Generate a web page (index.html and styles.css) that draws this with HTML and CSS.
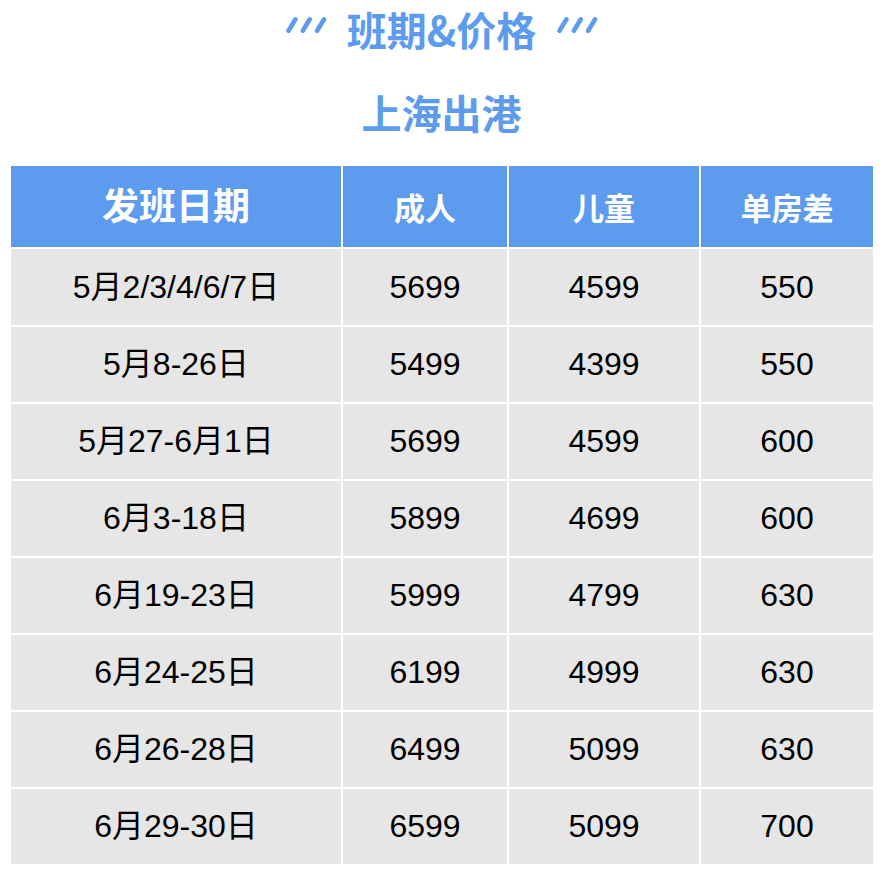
FILE: index.html
```html
<!DOCTYPE html>
<html lang="zh-CN">
<head>
<meta charset="utf-8">
<title>班期&amp;价格</title>
<link rel="stylesheet" href="styles.css">
</head>
<body>
<div class="page">
  <div class="title-row">
    <svg class="slashes" width="44" height="18" viewBox="0 0 44 18"><g stroke="#5d9bef" stroke-width="4.6" stroke-linecap="round"><line x1="4.5" y1="14.7" x2="11.5" y2="3.3"/><line x1="18.8" y1="14.7" x2="25.8" y2="3.3"/><line x1="33.1" y1="14.7" x2="40.1" y2="3.3"/></g></svg>
    <h1 class="title">班期&amp;价格</h1>
    <svg class="slashes" width="44" height="18" viewBox="0 0 44 18"><g stroke="#5d9bef" stroke-width="4.6" stroke-linecap="round"><line x1="4.5" y1="14.7" x2="11.5" y2="3.3"/><line x1="18.8" y1="14.7" x2="25.8" y2="3.3"/><line x1="33.1" y1="14.7" x2="40.1" y2="3.3"/></g></svg>
  </div>
  <h2 class="subtitle">上海出港</h2>
  <div class="table">
    <div class="th th-first">发班日期</div>
    <div class="th">成人</div>
    <div class="th">儿童</div>
    <div class="th">单房差</div>

    <div class="td">5月2/3/4/6/7日</div><div class="td">5699</div><div class="td">4599</div><div class="td">550</div>
    <div class="td">5月8-26日</div><div class="td">5499</div><div class="td">4399</div><div class="td">550</div>
    <div class="td">5月27-6月1日</div><div class="td">5699</div><div class="td">4599</div><div class="td">600</div>
    <div class="td">6月3-18日</div><div class="td">5899</div><div class="td">4699</div><div class="td">600</div>
    <div class="td">6月19-23日</div><div class="td">5999</div><div class="td">4799</div><div class="td">630</div>
    <div class="td">6月24-25日</div><div class="td">6199</div><div class="td">4999</div><div class="td">630</div>
    <div class="td">6月26-28日</div><div class="td">6499</div><div class="td">5099</div><div class="td">630</div>
    <div class="td">6月29-30日</div><div class="td">6599</div><div class="td">5099</div><div class="td">700</div>
  </div>
</div>
</body>
</html>
```

FILE: styles.css
```css
html, body {
  margin: 0;
  padding: 0;
  background: #ffffff;
}

.page {
  width: 883px;
  font-family: "Liberation Sans", "Noto Sans CJK SC", sans-serif;
}

.title-row {
  height: 55px;
  display: flex;
  align-items: flex-start;
  justify-content: center;
  gap: 19px;
}

.title {
  margin: 0;
  font-family: "Noto Sans CJK SC", sans-serif;
  font-weight: 700;
  font-size: 40px;
  line-height: 58px;
  color: #5d9bef;
}

.slashes {
  display: block;
  margin-top: 16px;
}

.subtitle {
  margin: 27px 0 0;
  height: 60px;
  text-align: center;
  font-family: "Noto Sans CJK SC", sans-serif;
  font-weight: 700;
  font-size: 40px;
  line-height: 60px;
  color: #5d9bef;
}

.table {
  margin: 24px 0 0 11px;
  width: 862px;
  display: grid;
  grid-template-columns: 330px 164px 190px 172px;
  grid-template-rows: 81px 76px repeat(7, 75px);
  gap: 2px;
  background: #ffffff;
}

.th {
  background: #5d9bef;
  color: #ffffff;
  font-family: "Noto Sans CJK SC", sans-serif;
  font-weight: 700;
  font-size: 31px;
  line-height: 1;
  display: flex;
  align-items: center;
  justify-content: center;
}

.th-first {
  font-size: 37px;
  padding-bottom: 5px;
}

.td {
  background: #e6e6e6;
  color: #000000;
  font-size: 32px;
  line-height: 1.15;
  display: flex;
  align-items: center;
  justify-content: center;
}
```
